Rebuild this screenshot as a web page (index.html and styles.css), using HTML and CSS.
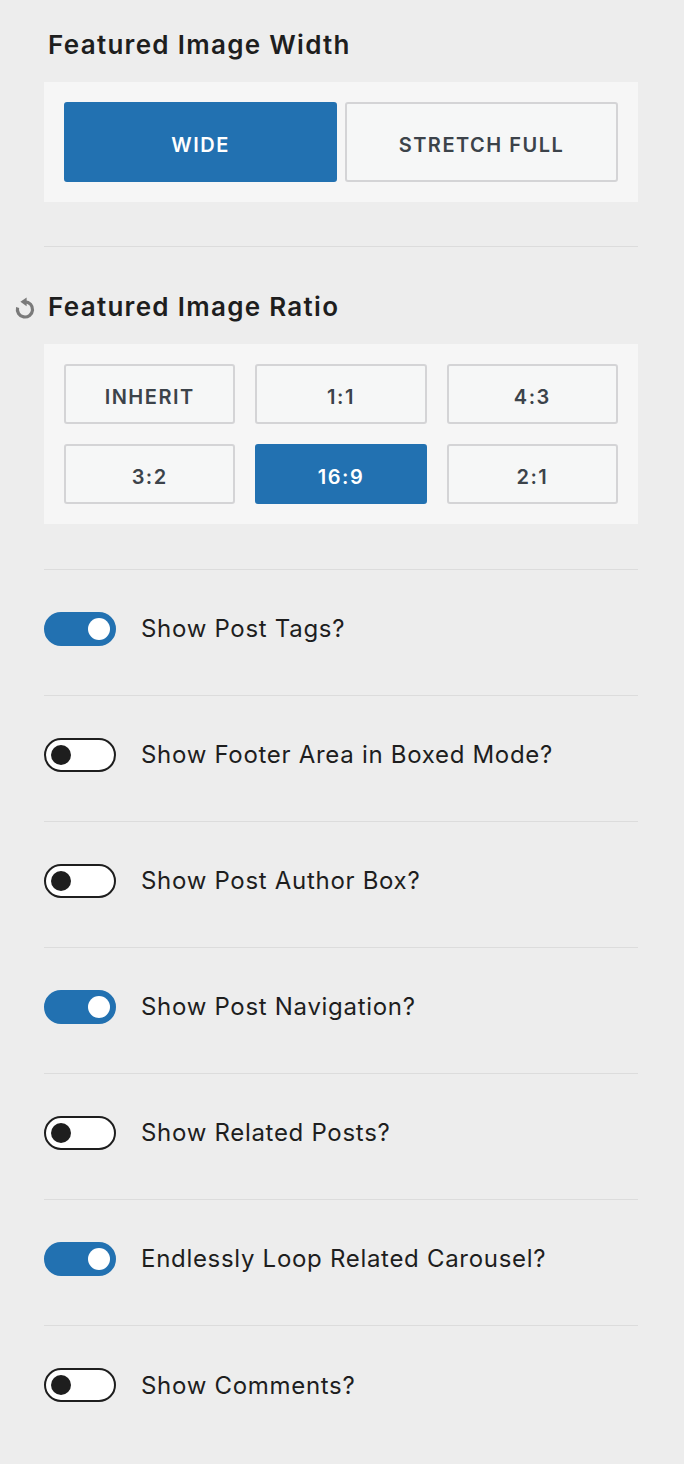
FILE: index.html
```html
<!DOCTYPE html>
<html lang="en">
<head>
    <meta charset="UTF-8">
    <meta name="viewport" content="width=device-width, initial-scale=1.0">
    <title>Post Settings</title>
    <link rel="stylesheet" href="styles.css">
</head>
<body>
    <div class="panel">
        <!-- Featured image width -->
        <div class="section">
            <h2 class="title">Featured Image Width</h2>
            <div class="btn-box two">
                <button class="opt active">Wide</button>
                <button class="opt">Stretch Full</button>
            </div>
        </div>

        <!-- Featured image ratio -->
        <div class="section ratio">
            <h2 class="title">
                <span class="reset">
                    <svg width="24" height="24" viewBox="0 0 24 24">
                        <path d="M12 4.8A7.6 7.6 0 1 1 4.6 10.5" fill="none" stroke="#7a7a7a" stroke-width="3.2"/>
                        <path d="M13.6 0.4L13.6 9.2L7.4 4.8Z" fill="#7a7a7a"/>
                    </svg>
                </span>
                Featured Image Ratio
            </h2>
            <div class="btn-box three">
                <button class="opt">Inherit</button>
                <button class="opt">1:1</button>
                <button class="opt">4:3</button>
                <button class="opt">3:2</button>
                <button class="opt active">16:9</button>
                <button class="opt">2:1</button>
            </div>
        </div>

        <!-- Toggles -->
        <div class="toggle-row"><span class="toggle on"></span><span class="label">Show Post Tags?</span></div>
        <div class="toggle-row"><span class="toggle"></span><span class="label">Show Footer Area in Boxed Mode?</span></div>
        <div class="toggle-row"><span class="toggle"></span><span class="label">Show Post Author Box?</span></div>
        <div class="toggle-row"><span class="toggle on"></span><span class="label">Show Post Navigation?</span></div>
        <div class="toggle-row"><span class="toggle"></span><span class="label">Show Related Posts?</span></div>
        <div class="toggle-row"><span class="toggle on"></span><span class="label">Endlessly Loop Related Carousel?</span></div>
        <div class="toggle-row"><span class="toggle"></span><span class="label">Show Comments?</span></div>
    </div>
</body>
</html>
```

FILE: styles.css
```css
body {
    font-family: Inter, "Noto Sans", sans-serif;
    background-color: #ededed;
    margin: 0;
    padding: 0;
    color: #1e1e1e;
}

.panel {
    width: 594px;
    margin-left: 44px;
    padding-top: 28px;
}

.section {
    padding-bottom: 44px;
    border-bottom: 1px solid #dcdcdc;
}

.section.ratio {
    padding-top: 43px;
    padding-bottom: 45px;
}

.title {
    position: relative;
    margin: 0 0 20px 4px;
    font-size: 26px;
    font-weight: 600;
    line-height: 34px;
    letter-spacing: 1.3px;
}

.reset {
    position: absolute;
    left: -35px;
    top: 5px;
    width: 24px;
    height: 24px;
}

.btn-box {
    background-color: #f6f6f6;
    padding: 20px;
    display: grid;
}

.btn-box.two {
    grid-template-columns: 1fr 1fr;
    gap: 8px;
}

.btn-box.two .opt {
    height: 80px;
}

.btn-box.three {
    grid-template-columns: 1fr 1fr 1fr;
    gap: 20px;
}

.btn-box.three .opt {
    height: 60px;
}

.opt {
    font-family: Inter, "Noto Sans", sans-serif;
    font-size: 20px;
    font-weight: 600;
    text-transform: uppercase;
    letter-spacing: 1.5px;
    color: #3c434a;
    background-color: #f6f7f7;
    border: 2px solid #d4d4d6;
    border-radius: 3px;
    padding: 5px 0 0;
    cursor: pointer;
}

.opt.active {
    background-color: #2271b1;
    border-color: #2271b1;
    color: white;
}

.toggle-row {
    display: flex;
    align-items: center;
    height: 126px;
    border-bottom: 1px solid #dcdcdc;
    padding-bottom: 8px;
    box-sizing: border-box;
}

.toggle-row:last-child {
    border-bottom: none;
}

.toggle {
    position: relative;
    width: 72px;
    height: 34px;
    box-sizing: border-box;
    border: 2px solid #1e1e1e;
    border-radius: 17px;
    background-color: white;
    flex-shrink: 0;
}

.toggle::after {
    content: "";
    position: absolute;
    left: 5px;
    top: 5px;
    width: 20px;
    height: 20px;
    border-radius: 50%;
    background-color: #1e1e1e;
}

.toggle.on {
    background-color: #2271b1;
    border-color: #2271b1;
}

.toggle.on::after {
    left: auto;
    right: 4px;
    top: 4px;
    width: 22px;
    height: 22px;
    background-color: white;
}

.label {
    margin-left: 25px;
    font-size: 24px;
    letter-spacing: 0.7px;
    color: #1e1e1e;
}
```
